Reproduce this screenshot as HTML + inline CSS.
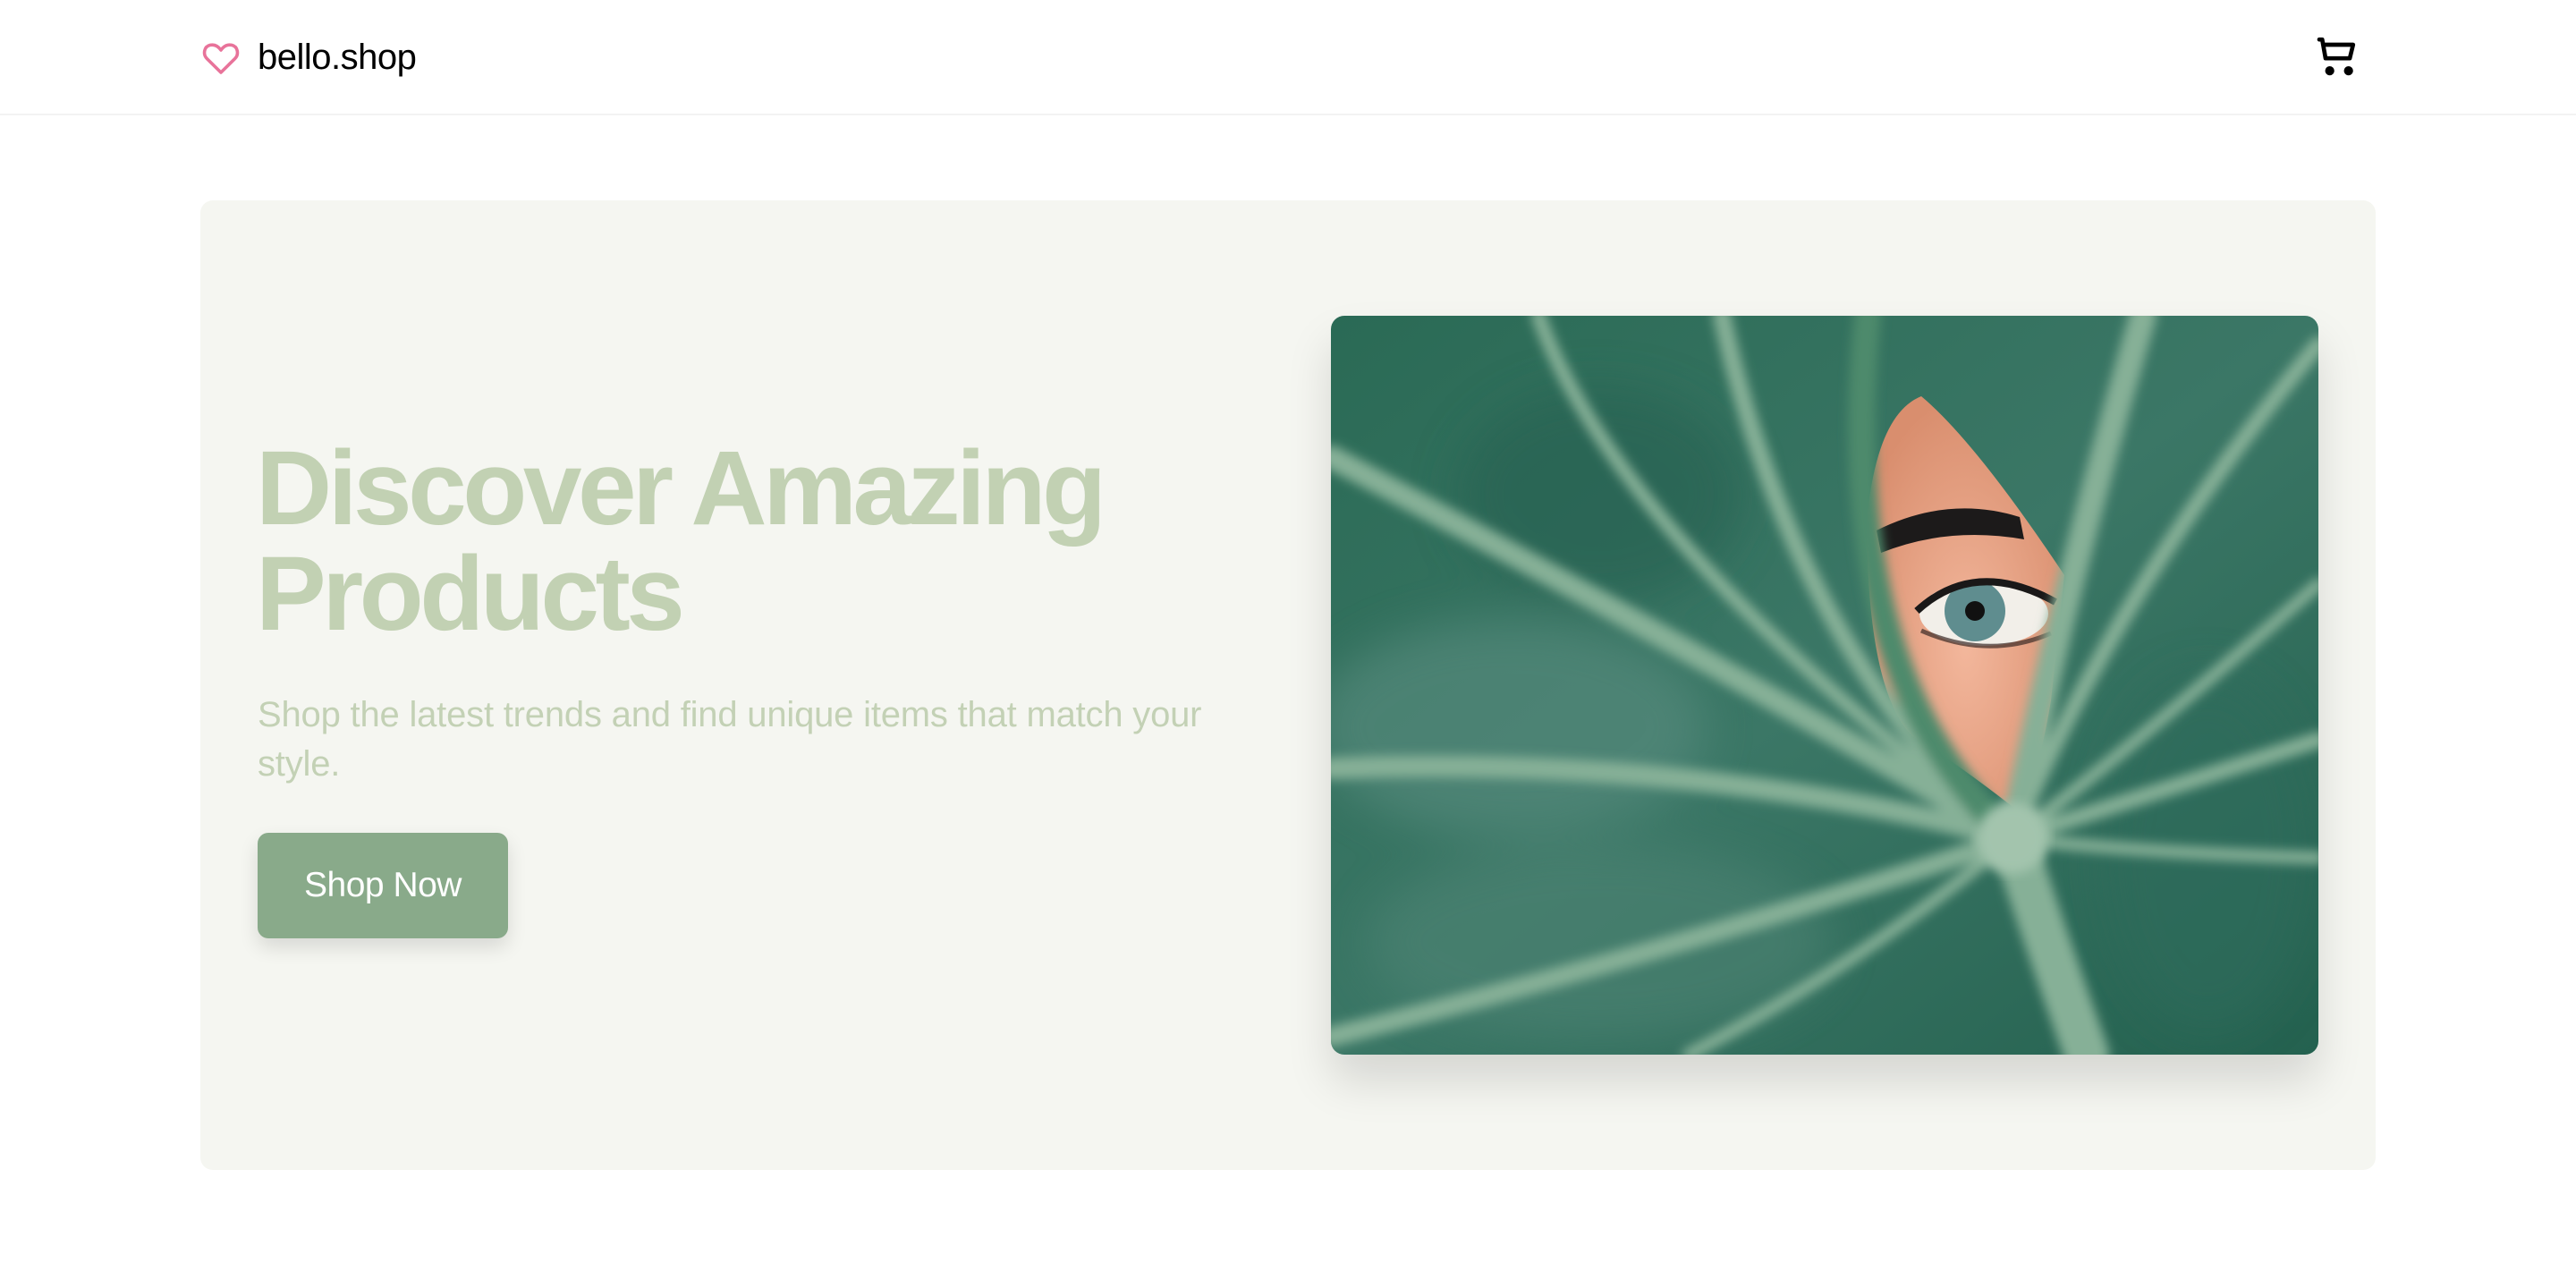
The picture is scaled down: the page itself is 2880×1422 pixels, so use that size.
<!DOCTYPE html>
<html><head><meta charset="utf-8"><style>
*{margin:0;padding:0;box-sizing:border-box}
html,body{width:2880px;height:1422px;background:#fff;font-family:"Liberation Sans",sans-serif;overflow:hidden}
header{position:absolute;left:0;top:0;width:2880px;height:129px;border-bottom:2px solid #f3f3f3;background:#fff}
.logo{position:absolute;left:222px;top:40px;width:50px;height:48px}
.brand{position:absolute;left:288px;top:42px;font-size:40px;color:#000;letter-spacing:-0.5px}
.cart{position:absolute;left:2586px;top:36px;width:56px;height:56px}
.card{position:absolute;left:224px;top:224px;width:2432px;height:1084px;background:#f5f6f1;border-radius:14px}
h1{position:absolute;left:286px;top:487px;font-size:118px;line-height:118px;font-weight:bold;color:#c2d1b3;letter-spacing:-4.5px;white-space:nowrap}
p{position:absolute;left:288px;top:772px;font-size:40px;line-height:55px;color:#c3d1b5;width:1110px;letter-spacing:-0.2px}
.btn{position:absolute;left:288px;top:931px;width:280px;height:118px;background:#89aa8a;border-radius:12px;color:#fff;font-size:39px;text-align:center;line-height:118px;box-shadow:0 10px 22px rgba(0,0,0,.12);letter-spacing:-0.5px}
.img{position:absolute;left:1488px;top:353px;width:1104px;height:826px;border-radius:15px;overflow:hidden;box-shadow:0 30px 50px rgba(0,0,0,.13)}
</style></head><body>
<header>
<svg class="logo" viewBox="0 0 24 24" fill="none" stroke="#e8739a" stroke-width="1.8" stroke-linejoin="round"><path d="M12 20.5 L4.2 12.8 C1.8 10.4 2.5 6 6 5.2 C8.5 4.7 10.6 6 12 8 C13.4 6 15.5 4.7 18 5.2 C21.5 6 22.2 10.4 19.8 12.8 Z"/></svg>
<div class="brand">bello.shop</div>
<svg class="cart" viewBox="0 0 24 24" fill="none" stroke="#000" stroke-width="2" stroke-linecap="round" stroke-linejoin="round"><path d="M3 3.5h1.4l1.6 9h11.6l1.6-6.5H5.2"/><circle cx="8" cy="18.5" r="1.2" fill="#000"/><circle cx="17" cy="18.5" r="1.2" fill="#000"/></svg>
</header>
<div class="card"></div>
<h1>Discover Amazing<br>Products</h1>
<p>Shop the latest trends and find unique items that match your style.</p>
<div class="btn">Shop Now</div>
<div class="img">
<svg width="1104" height="826" viewBox="0 0 1104 826">
<defs>
<linearGradient id="bg" x1="0" y1="0" x2="1" y2="1"><stop offset="0" stop-color="#2a6a55"/><stop offset=".5" stop-color="#3b7766"/><stop offset="1" stop-color="#24614f"/></linearGradient>
<radialGradient id="skin" cx=".5" cy=".6" r=".6"><stop offset="0" stop-color="#f3b79c"/><stop offset="1" stop-color="#d98e6e"/></radialGradient>
<filter id="b"><feGaussianBlur stdDeviation="6"/></filter>
<filter id="b2"><feGaussianBlur stdDeviation="25"/></filter>
</defs>
<rect width="1104" height="826" fill="url(#bg)"/>
<g filter="url(#b2)" opacity=".6">
<ellipse cx="200" cy="460" rx="220" ry="120" fill="#5a8d80"/>
<ellipse cx="300" cy="700" rx="260" ry="110" fill="#4d8373"/>
<ellipse cx="980" cy="600" rx="120" ry="200" fill="#2f6c5b"/>
<ellipse cx="300" cy="200" rx="160" ry="120" fill="#266151"/>
</g>
<path d="M599 230 Q610 110 660 90 Q720 140 820 290 L805 430 Q790 520 770 555 Q700 500 650 470 Q600 420 599 230Z" fill="url(#skin)"/>
<path d="M610 240 Q690 200 770 225 L775 250 Q690 235 615 265Z" fill="#1c1a1a"/>
<ellipse cx="730" cy="333" rx="72" ry="36" fill="#f2efe9"/>
<circle cx="720" cy="330" r="34" fill="#5f8d8f"/>
<circle cx="720" cy="330" r="11" fill="#111"/>
<path d="M655 330 Q720 270 810 320" stroke="#1a1818" stroke-width="8" fill="none"/>
<path d="M660 352 Q735 385 805 355" stroke="#3a2a25" stroke-width="5" fill="none" opacity=".7"/>
<g stroke="#86b097" fill="none" stroke-linecap="round" filter="url(#b)">
<path d="M0 158 Q420 380 762 584" stroke-width="26"/>
<path d="M0 506 Q400 490 762 584" stroke-width="24"/>
<path d="M0 806 Q420 700 762 584" stroke-width="22"/>
<path d="M232 0 Q320 250 762 584" stroke-width="16"/>
<path d="M437 0 Q520 380 762 584" stroke-width="20"/>
<path d="M600 0 Q560 400 762 584" stroke-width="30" stroke="#4e8a6c"/>
<path d="M908 0 Q820 300 762 584" stroke-width="30"/>
<path d="M1104 32 Q880 300 762 584" stroke-width="18"/>
<path d="M1104 300 Q900 480 762 584" stroke-width="14"/>
<path d="M1104 474 Q900 540 762 584" stroke-width="18"/>
<path d="M1104 606 Q900 600 762 584" stroke-width="14"/>
<path d="M762 584 Q800 700 845 826" stroke-width="50"/>
<path d="M762 584 Q600 720 400 826" stroke-width="14"/>
</g>
<circle cx="762" cy="584" r="40" fill="#a3c4ad" filter="url(#b)"/>
</svg>
</div>
</body></html>
